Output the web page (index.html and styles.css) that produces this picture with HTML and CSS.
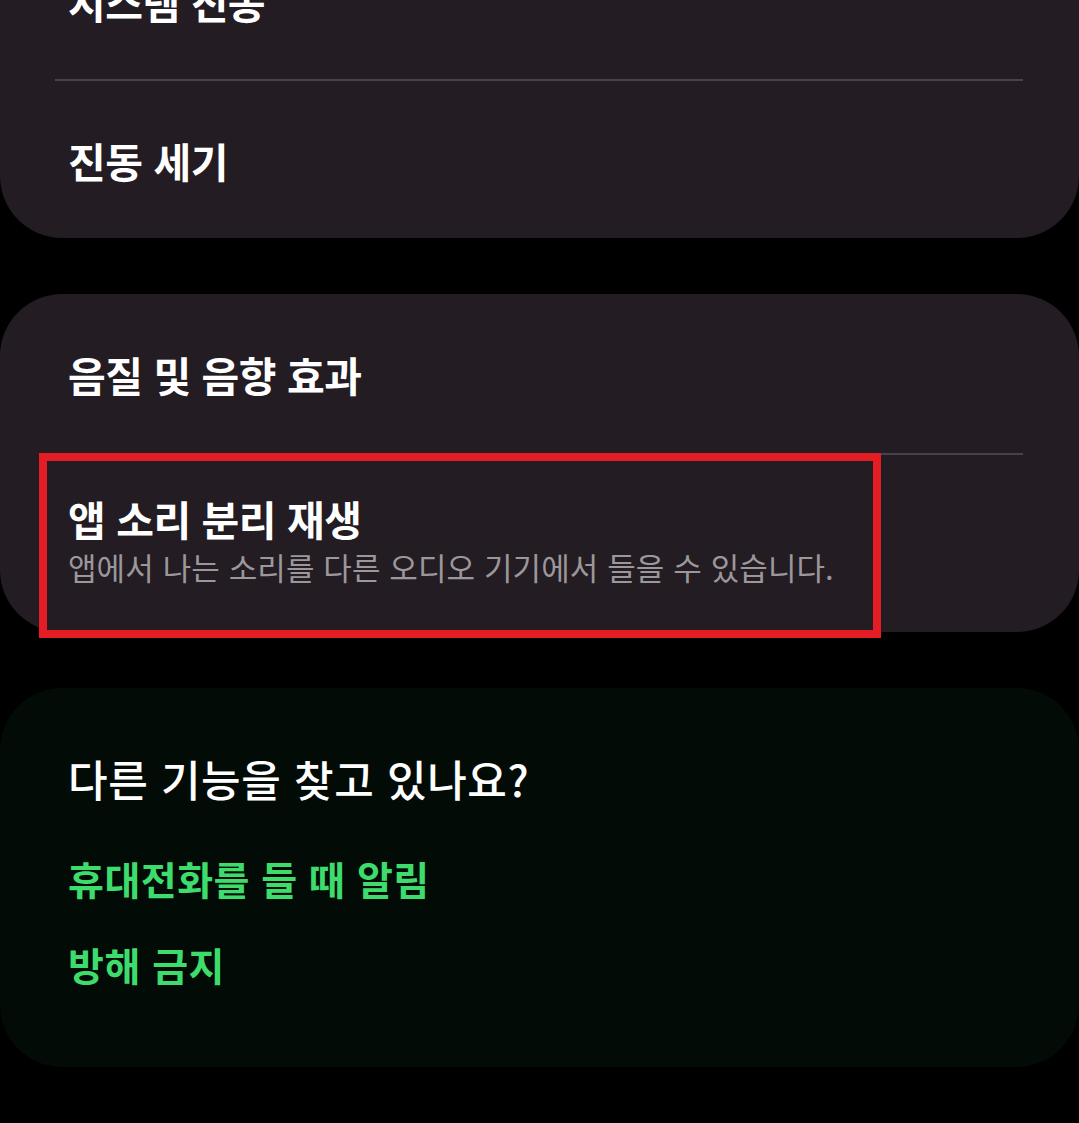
FILE: index.html
```html
<!DOCTYPE html>
<html lang="ko">
<head>
    <meta charset="UTF-8">
    <meta name="viewport" content="width=device-width, initial-scale=1.0">
    <title>소리 및 진동</title>
    <link rel="stylesheet" href="styles.css">
</head>
<body>

<div class="screen">
    <!-- Vibration group, scrolled partly out of view -->
    <div class="card">
        <div class="row">
            <p class="row-title">시스템 진동</p>
        </div>
        <div class="divider"></div>
        <div class="row">
            <p class="row-title">진동 세기</p>
        </div>
    </div>

    <div class="card">
        <div class="row row-first">
            <p class="row-title">음질 및 음향 효과</p>
        </div>
        <div class="divider"></div>
        <div class="row row-tall">
            <p class="row-title">앱 소리 분리 재생</p>
            <p class="row-summary">앱에서 나는 소리를 다른 오디오 기기에서 들을 수 있습니다.</p>
            <div class="highlight"></div>
        </div>
    </div>

    <div class="card card-suggest">
        <h2>다른 기능을 찾고 있나요?</h2>
        <a class="link" href="#">휴대전화를 들 때 알림</a>
        <a class="link" href="#">방해 금지</a>
    </div>
</div>

</body>
</html>
```

FILE: styles.css
```css
body {
    font-family: "Noto Sans CJK KR", "Noto Sans", sans-serif;
    background-color: #000;
    color: #fff;
    margin: 0;
    padding: 0;
    overflow: hidden;
}

p {
    margin: 0;
}

.screen {
    margin-top: -78px;
    display: flex;
    flex-direction: column;
    gap: 56px;
}

.card {
    background-color: #231c22;
    border-radius: 62px;
}

.row {
    position: relative;
    box-sizing: border-box;
    height: 157px;
    padding: 0 68px;
    display: flex;
    flex-direction: column;
    justify-content: center;
}

.row-first {
    height: 159px;
}

.row-tall {
    height: 177px;
    justify-content: flex-start;
    padding-top: 38px;
}

.row-title {
    font-size: 41px;
    font-weight: 700;
    line-height: 50px;
    letter-spacing: -0.5px;
}

.row-summary {
    margin-top: 4px;
    font-size: 31px;
    line-height: 40px;
    letter-spacing: 0.1px;
    color: #9b979b;
}

.divider {
    height: 2px;
    margin: 0 56px 0 55px;
    background-color: #4a424a;
}

/* Red annotation frame over the selected item */
.highlight {
    position: absolute;
    left: 39px;
    top: -2px;
    width: 842px;
    height: 185px;
    box-sizing: border-box;
    border: 8px solid #e41d25;
}

.card-suggest {
    background-color: #030b06;
    padding: 57px 68px 78px;
    display: flex;
    flex-direction: column;
    align-items: flex-start;
}

.card-suggest h2 {
    margin: 0 0 42px;
    font-size: 43px;
    font-weight: 500;
    line-height: 66px;
    letter-spacing: 0.6px;
}

.link {
    font-size: 39px;
    font-weight: 700;
    line-height: 50px;
    letter-spacing: 0.5px;
    color: #3ddc6c;
    text-decoration: none;
}

.link + .link {
    margin-top: 36px;
}
```
